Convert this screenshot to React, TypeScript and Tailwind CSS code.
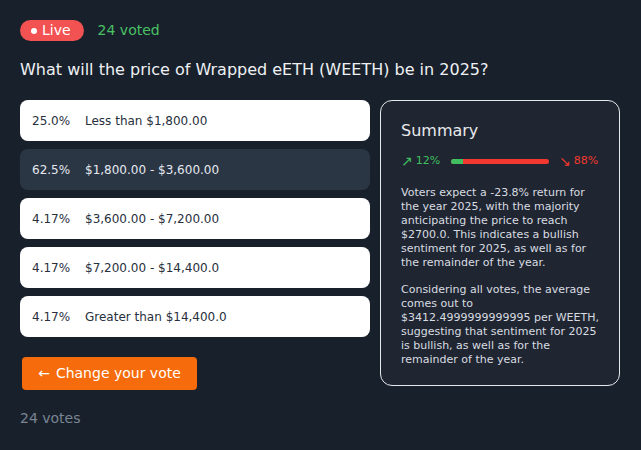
import React from "react";

const options = [
  { pct: "25.0%", label: "Less than $1,800.00", selected: false },
  { pct: "62.5%", label: "$1,800.00 - $3,600.00", selected: true },
  { pct: "4.17%", label: "$3,600.00 - $7,200.00", selected: false },
  { pct: "4.17%", label: "$7,200.00 - $14,400.0", selected: false },
  { pct: "4.17%", label: "Greater than $14,400.0", selected: false },
];

export default function App() {
  return (
    <div
      className="min-h-[450px] w-full bg-[#18202b] p-5 text-[#e5e7eb]"
      style={{ fontFamily: '"DejaVu Sans", sans-serif' }}
    >
      <div className="flex items-center gap-[14px]">
        <span className="flex h-[21px] items-center gap-[5px] rounded-full bg-[#f25252] pl-[11px] pr-[13px] text-[14px] text-white">
          <span className="h-[6px] w-[6px] rounded-full bg-white" />
          Live
        </span>
        <span className="text-[14px] text-[#4ac065]">24 voted</span>
      </div>

      <h1 className="mt-[18px] text-[16px] leading-[22px] text-[#eef0f3]">
        What will the price of Wrapped eETH (WEETH) be in 2025?
      </h1>

      <div className="mt-[19px] grid grid-cols-[350px_240px] gap-[10px]">
        <div className="flex flex-col">
          <div className="flex flex-col gap-[8px]">
            {options.map((o) => (
              <div
                key={o.label}
                className={
                  o.selected
                    ? "flex h-[41px] items-center rounded-lg bg-[#2b3645] px-3 text-[12px] text-[#e5e9ef]"
                    : "flex h-[41px] items-center rounded-lg bg-white px-3 text-[12px] text-[#27303c]"
                }
              >
                <span className="w-[53px]">{o.pct}</span>
                <span>{o.label}</span>
              </div>
            ))}
          </div>
          <button className="ml-[2px] mt-[20px] flex h-[33px] w-[175px] items-center justify-center gap-[6px] rounded bg-[#f66b0b] text-[14px] text-white">
            <span>←</span>
            <span>Change your vote</span>
          </button>
          <div className="mt-[18px] text-[14px] text-[#7a8594]">24 votes</div>
        </div>

        <div className="h-[286px] rounded-xl border border-[#e6e8eb] bg-[#202631] px-5 pt-[19px]">
          <h2 className="text-[16px] leading-[22px] text-[#e8eaed]">Summary</h2>
          <div className="mt-[9px] flex h-[20px] items-center text-[11px]">
            <span className="flex w-[50px] items-center gap-[3px] text-[#3fbf5f]">
              <span className="text-[14px]">↗</span>12%
            </span>
            <div className="flex h-[5px] w-[98px] overflow-hidden rounded-full bg-[#f2382f]">
              <div className="h-full w-[12%] bg-[#3fbf5f]" />
            </div>
            <span className="ml-[10px] flex items-center gap-[3px] text-[#f2382f]">
              <span className="text-[14px]">↘</span>88%
            </span>
          </div>
          <p className="mt-[15px] text-[11px] leading-[14px] text-[#d8dce1]">
            Voters expect a -23.8% return for the year 2025, with the majority anticipating the price to reach $2700.0. This indicates a bullish sentiment for 2025, as well as for the remainder of the year.
          </p>
          <p className="mt-[13px] text-[11px] leading-[14px] text-[#d8dce1]">
            Considering all votes, the average comes out to $3412.4999999999995 per WEETH, suggesting that sentiment for 2025 is bullish, as well as for the remainder of the year.
          </p>
        </div>
      </div>
    </div>
  );
}
